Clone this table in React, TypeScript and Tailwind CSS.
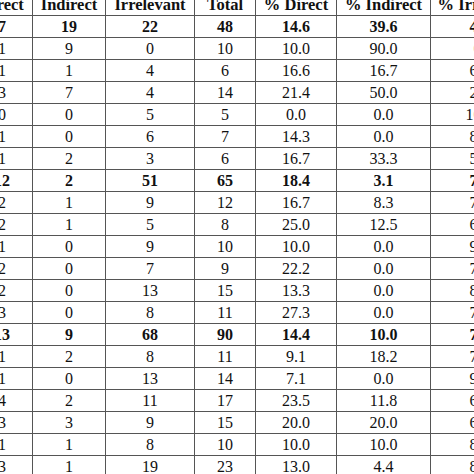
const header = ["Direct", "Indirect", "Irrelevant", "Total", "% Direct", "% Indirect", "% Irrelevant"];

type Row = { bold?: boolean; cells: string[] };

const rows: Row[] = [
  { bold: true, cells: ["7", "19", "22", "48", "14.6", "39.6", "45.8"] },
  { cells: ["1", "9", "0", "10", "10.0", "90.0", "0.0"] },
  { cells: ["1", "1", "4", "6", "16.6", "16.7", "66.7"] },
  { cells: ["3", "7", "4", "14", "21.4", "50.0", "28.6"] },
  { cells: ["0", "0", "5", "5", "0.0", "0.0", "100.0"] },
  { cells: ["1", "0", "6", "7", "14.3", "0.0", "85.7"] },
  { cells: ["1", "2", "3", "6", "16.7", "33.3", "50.0"] },
  { bold: true, cells: ["12", "2", "51", "65", "18.4", "3.1", "78.5"] },
  { cells: ["2", "1", "9", "12", "16.7", "8.3", "75.0"] },
  { cells: ["2", "1", "5", "8", "25.0", "12.5", "62.5"] },
  { cells: ["1", "0", "9", "10", "10.0", "0.0", "90.0"] },
  { cells: ["2", "0", "7", "9", "22.2", "0.0", "77.8"] },
  { cells: ["2", "0", "13", "15", "13.3", "0.0", "86.7"] },
  { cells: ["3", "0", "8", "11", "27.3", "0.0", "72.7"] },
  { bold: true, cells: ["13", "9", "68", "90", "14.4", "10.0", "75.6"] },
  { cells: ["1", "2", "8", "11", "9.1", "18.2", "72.7"] },
  { cells: ["1", "0", "13", "14", "7.1", "0.0", "92.9"] },
  { cells: ["4", "2", "11", "17", "23.5", "11.8", "64.7"] },
  { cells: ["3", "3", "9", "15", "20.0", "20.0", "60.0"] },
  { cells: ["1", "1", "8", "10", "10.0", "10.0", "80.0"] },
  { cells: ["3", "1", "19", "23", "13.0", "4.4", "82.6"] },
];

const widths = ["w-[61px]", "w-[73px]", "w-[89px]", "w-[61px]", "w-[81px]", "w-[94px]", "w-[106px]"];

export default function App() {
  return (
    <div className="w-[474px] h-[474px] overflow-hidden bg-white">
      <table className="table-fixed border-collapse ml-[-29px] mt-[-7px] w-[565px] text-[16px] text-[#111] font-['Liberation_Serif','Times_New_Roman',serif]">
        <colgroup>
          {widths.map((w, i) => (
            <col key={i} className={w} />
          ))}
        </colgroup>
        <thead>
          <tr>
            {header.map((h) => (
              <th key={h} className="h-[22px] p-0 leading-[21px] text-center text-[16.5px] font-bold border border-[#555] whitespace-nowrap">
                {h}
              </th>
            ))}
          </tr>
        </thead>
        <tbody>
          {rows.map((r, i) => (
            <tr key={i}>
              {r.cells.map((c, j) => (
                <td
                  key={j}
                  className={`h-[22px] p-0 leading-[21px] text-center border border-[#555] whitespace-nowrap ${r.bold ? "font-bold" : "font-normal"}`}
                >
                  {c}
                </td>
              ))}
            </tr>
          ))}
        </tbody>
      </table>
    </div>
  );
}
